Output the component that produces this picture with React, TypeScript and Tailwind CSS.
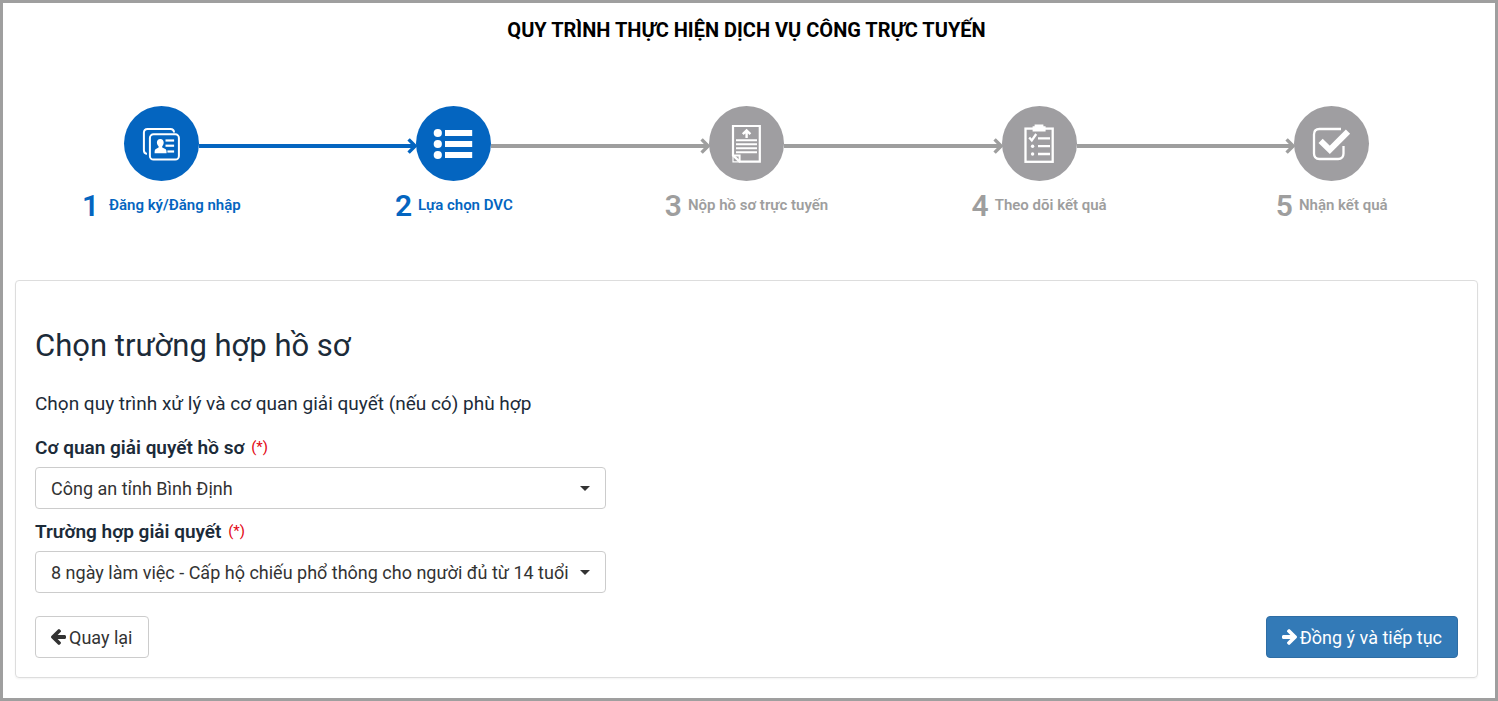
import type { ReactNode } from "react";
import clsx from "clsx";

type Step = {
  label: string;
  icon: ReactNode;
};

const STEPS: Step[] = [
  { label: "Đăng ký/Đăng nhập", icon: <IdCardIcon /> },
  { label: "Lựa chọn DVC", icon: <ListIcon /> },
  { label: "Nộp hồ sơ trực tuyến", icon: <DocumentIcon /> },
  { label: "Theo dõi kết quả", icon: <ClipboardIcon /> },
  { label: "Nhận kết quả", icon: <CheckIcon /> },
];

const CURRENT_STEP = 2;

function IdCardIcon() {
  return (
    <svg viewBox="0 0 75 75" className="size-full" fill="none" stroke="white" strokeWidth="2" aria-hidden="true">
      <path d="M50 26.5c0-2.2-1.2-3.6-3.6-3.6H23.6c-2.4 0-3.7 1.4-3.7 3.7v17.6c0 2 1 3.3 3 3.7" />
      <rect x="25.9" y="28.3" width="29" height="25.2" rx="3.6" />
      <g fill="white" stroke="none">
        <path d="M36.3 33c2.2 0 3.4 1.5 3.4 3.6 0 1.5-.6 2.8-1.5 3.6v1.2l3.1 1.5c1 .6 1.3 1.6 1.3 4.3H30.6c0-2.7.3-3.7 1.3-4.3l2.7-1.5v-1.2c-1-.8-1.7-2.1-1.7-3.6 0-2.1 1.2-3.6 3.4-3.6z" />
        <rect x="41.5" y="33.4" width="8.6" height="2.2" />
        <rect x="41.5" y="38.6" width="8.6" height="2.2" />
        <rect x="43.4" y="44.4" width="6.7" height="2.2" />
      </g>
    </svg>
  );
}

function ListIcon() {
  return (
    <svg viewBox="0 0 75 75" className="size-full" fill="white" aria-hidden="true">
      {[27, 38, 49].map((y) => (
        <g key={y}>
          <circle cx="21.8" cy={y} r="4.1" />
          <rect x="29" y={y - 3} width="27.2" height="6" />
        </g>
      ))}
    </svg>
  );
}

function DocumentIcon() {
  return (
    <svg viewBox="0 0 75 75" className="size-full" fill="none" stroke="white" strokeWidth="2.2" aria-hidden="true">
      <path d="M24 20h26.8v35.6H30.6L24 49.4z" />
      <path d="M24 49.4h6.6v6.2" strokeWidth="2" />
      <path d="M24 49v6.8h7" strokeWidth="1.2" />
      <path d="M37.6 32v-7.5M33.8 28.2l3.8-3.8 3.8 3.8" strokeWidth="2.4" />
      <path d="M27 34.2h21M27 38.2h21M27 42.2h21M27 46.2h21" strokeWidth="2" />
    </svg>
  );
}

function ClipboardIcon() {
  return (
    <svg viewBox="0 0 75 75" className="size-full" fill="none" stroke="white" strokeWidth="2.3" aria-hidden="true">
      <rect x="23.5" y="22.6" width="27.2" height="33.2" />
      <path d="M30.6 20.2h2v-1.6h8.800v1.600h2.200v5.200H30.6z" fill="white" stroke="none" />
      <path d="M27.2 31.4l2.6 3 4.4-6.4" />
      <path d="M36 32.3h12M36 40.2h12M36 48h12" />
      <circle cx="30.6" cy="40.2" r="1.7" fill="white" stroke="none" />
      <circle cx="30.6" cy="48" r="1.7" fill="white" stroke="none" />
    </svg>
  );
}

function CheckIcon() {
  return (
    <svg viewBox="0 0 75 75" className="size-full" fill="none" stroke="white" aria-hidden="true">
      <path
        d="M47 23H25.4c-3.6 0-5.4 1.9-5.4 5.4v19.2c0 3.6 1.8 5.4 5.4 5.4h18.7c3.6 0 5.4-1.8 5.4-5.4V40"
        strokeWidth="2.3"
      />
      <path d="M26.6 34.8l9.2 9L54 25.6" strokeWidth="6" />
    </svg>
  );
}

function ArrowIcon({ className }: { className?: string }) {
  return (
    <svg viewBox="64 181 1472 1558" className={clsx("h-4 w-[15px]", className)} fill="currentColor" aria-hidden="true">
      <path d="M1536 896v128q0 53-32.5 90.5T1419 1152H715l293 294q38 36 38 90t-38 90l-75 76q-37 37-90 37-52 0-91-37L101 1050q-37-37-37-90 0-52 37-91l651-650q38-38 91-38 52 0 90 38l75 74q38 38 38 91t-38 91L715 768h704q52 0 84.5 37.5T1536 896z" />
    </svg>
  );
}

function StepItem({ step, number }: { step: Step; number: number }) {
  const reached = number <= CURRENT_STEP;
  const nextReached = number < CURRENT_STEP;

  return (
    <li aria-current={number === CURRENT_STEP ? "step" : undefined}>
      <div className="flex items-center">
        <div className={clsx("mt-[5px] flex h-4 flex-1 items-center", reached ? "text-[#0465c0]" : "text-[#9e9e9e]")}>
          {number > 1 && (
            <>
              <span className="h-1 flex-1 bg-current" />
              <svg
                viewBox="0 0 10 16"
                className="-ml-2 h-4 w-[10px] overflow-visible"
                fill="none"
                stroke="currentColor"
                strokeWidth="3.4"
                aria-hidden="true"
              >
                <path d="M2.6 1.4L9.2 8l-6.6 6.6" />
              </svg>
            </>
          )}
        </div>
        <div className={clsx("size-[75px] rounded-full", reached ? "bg-[#0465c0]" : "bg-[#9f9ea1]")}>{step.icon}</div>
        <div className={clsx("mt-[5px] flex h-4 flex-1 items-center", nextReached ? "text-[#0465c0]" : "text-[#9e9e9e]")}>
          {number < STEPS.length && <span className="h-1 flex-1 bg-current" />}
        </div>
      </div>
      <div
        className={clsx(
          "mt-1 flex items-start justify-center font-semibold",
          number === 1 ? "gap-2.5" : "gap-1.5",
          reached ? "text-[#0465c0]" : "text-[#9e9e9e]",
        )}
      >
        <span className="text-[30px] leading-[42px]">{number}</span>
        <span className="text-[15px] leading-10">{step.label}</span>
      </div>
    </li>
  );
}

function SelectField({ id, label, value }: { id: string; label: string; value: string }) {
  return (
    <div className="mb-2">
      <label htmlFor={id} className="block h-[34px] text-[19px] leading-[30px] font-semibold">
        {label} <span className="ml-0.5 align-top text-[15px] leading-7 font-normal text-[#e30613]">(*)</span>
      </label>
      <div className="relative">
        <select
          id={id}
          defaultValue={value}
          className="h-[42px] w-full appearance-none rounded-sm border border-[#ccc] bg-white pr-7 pl-[15px] text-[18px] text-[#333]"
        >
          <option>{value}</option>
        </select>
        <span className="pointer-events-none absolute top-[19px] right-4 border-x-5 border-t-5 border-x-transparent border-t-[#333]" />
      </div>
    </div>
  );
}

export default function App() {
  return (
    <main className="min-h-screen border-3 border-[#9f9f9f] bg-white pr-[17px] pb-5 pl-3 font-['Roboto',sans-serif] text-[#1c2b39]">
      <h1 className="pt-3 text-center text-[20px] leading-[30px] font-bold text-black">
        QUY TRÌNH THỰC HIỆN DỊCH VỤ CÔNG TRỰC TUYẾN
      </h1>

      <ol className="mt-[61px] grid grid-cols-5">
        {STEPS.map((step, index) => (
          <StepItem key={step.label} step={step} number={index + 1} />
        ))}
      </ol>

      <section className="mt-[53px] rounded-sm border border-[#ddd] px-[19px] pt-[45px] pb-[19px] shadow-xs">
        <h2 className="text-[31px] leading-10">Chọn trường hợp hồ sơ</h2>
        <p className="mt-6 mb-[15px] text-[19px] leading-7">
          Chọn quy trình xử lý và cơ quan giải quyết (nếu có) phù hợp
        </p>

        <form onSubmit={(event) => event.preventDefault()}>
          <div className="w-[571px] max-w-full">
            <SelectField id="agency" label="Cơ quan giải quyết hồ sơ" value="Công an tỉnh Bình Định" />
            <SelectField
              id="case"
              label="Trường hợp giải quyết"
              value="8 ngày làm việc - Cấp hộ chiếu phổ thông cho người đủ từ 14 tuổi"
            />
          </div>

          <div className="mt-[23px] flex justify-between text-[18px]">
            <button
              type="button"
              className="flex h-[42px] items-center gap-[3px] rounded-sm border border-[#ccc] bg-white px-[15px] text-[#333]"
            >
              <ArrowIcon />
              Quay lại
            </button>
            <button
              type="submit"
              className="flex h-[42px] items-center gap-[3px] rounded-sm border border-[#2e6da4] bg-[#337ab7] px-[15px] text-white"
            >
              <ArrowIcon className="rotate-180" />
              Đồng ý và tiếp tục
            </button>
          </div>
        </form>
      </section>
    </main>
  );
}
